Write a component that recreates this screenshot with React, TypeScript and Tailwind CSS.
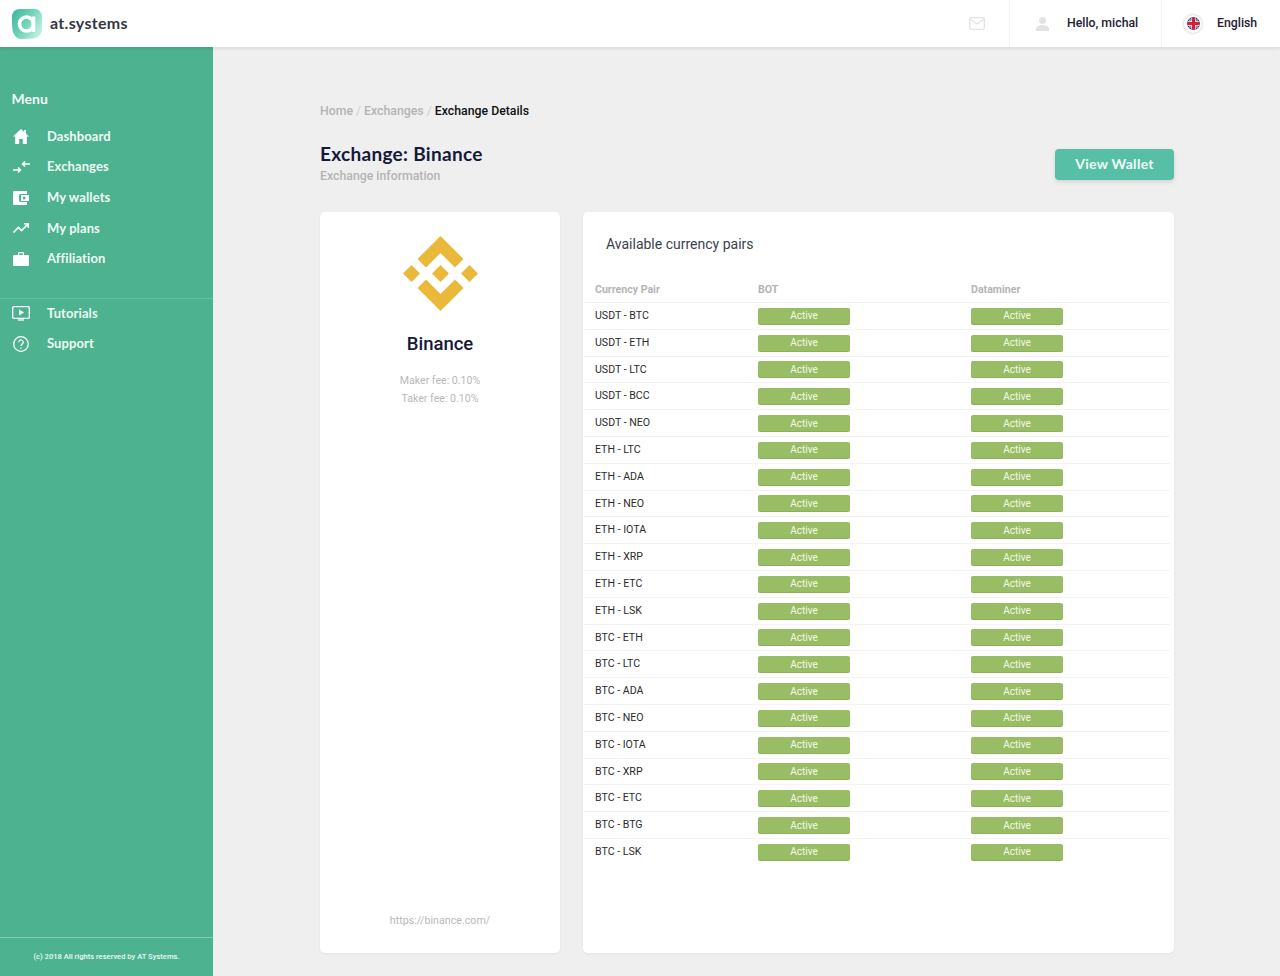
import React from "react";

const pairs = ["USDT - BTC","USDT - ETH","USDT - LTC","USDT - BCC","USDT - NEO","ETH - LTC","ETH - ADA","ETH - NEO","ETH - IOTA","ETH - XRP","ETH - ETC","ETH - LSK","BTC - ETH","BTC - LTC","BTC - ADA","BTC - NEO","BTC - IOTA","BTC - XRP","BTC - ETC","BTC - BTG","BTC - LSK"];

const Logo = () => (
  <svg width="32" height="32" viewBox="0 0 32 32">
    <defs>
      <linearGradient id="lg" x1="0" y1="0" x2="1" y2="0.6">
        <stop offset="0" stopColor="#3fb3a0" />
        <stop offset="0.55" stopColor="#6fd3b8" />
        <stop offset="1" stopColor="#b5f0da" />
      </linearGradient>
    </defs>
    <path d="M9 1h14c5 0 8 3.500 8 8v12c0 5-4 9-9 9.500l-11 .5c-4 0-7-2-8.500-6C1 22 1 14 1 9c0-4.500 3-8 8-8z" fill="url(#lg)" />
    <circle cx="15.500" cy="16" r="7" fill="none" stroke="#fff" strokeWidth="3.600" />
    <rect x="20.500" y="8.500" width="3.800" height="15.500" fill="#fff" />
  </svg>
);

const Item = ({ icon, label, h = "h-[30.7px]" }: { icon: React.ReactNode; label: string; h?: string }) => (
  <div className={`flex items-center pl-3 ${h}`}>
    <span className="flex w-[18px] justify-center">{icon}</span>
    <span className="ml-[17px] text-[13px] font-bold tracking-[0.1px] text-[#eefaf5]" style={{ fontFamily: "Lato, sans-serif" }}>{label}</span>
  </div>
);

const Home = <svg width="16" height="15" viewBox="0 0 16 15" fill="#fff"><path d="M8 0 0 7.500h2.200V15h4v-5h3.600v5h4V7.500H16L13 4.700V1h-2v1.800z" /></svg>;
const Swap = <svg width="17" height="12" viewBox="0 0 17 12" fill="none" stroke="#fff" strokeWidth="1.500"><path d="M0 9h7M5 6.500 7.500 9 5 11.500M17 3h-7M12 .5 9.500 3 12 5.500" /></svg>;
const Wallet = <svg width="16" height="14" viewBox="0 0 16 14" fill="#fff"><path fillRule="evenodd" d="M1 0h13v3H8a2 2 0 0 0-2 2v4a2 2 0 0 0 2 2h6v3H1a1 1 0 0 1-1-1V1a1 1 0 0 1 1-1zM8 4h8v6H8zm2 1.800v2.400h2.400V5.800z" /></svg>;
const Trend = <svg width="16" height="10" viewBox="0 0 16 10" fill="none" stroke="#fff" strokeWidth="1.600"><path d="M.5 9.500 5.500 4.500l3 3L15 1M11 .8h4.300V5" /></svg>;
const Case = <svg width="16" height="14" viewBox="0 0 16 14" fill="#fff"><path fillRule="evenodd" d="M5 3V1a1 1 0 0 1 1-1h4a1 1 0 0 1 1 1v2h4a1 1 0 0 1 1 1v9a1 1 0 0 1-1 1H1a1 1 0 0 1-1-1V4a1 1 0 0 1 1-1zm1.300 0h3.400V1.300H6.300z" /></svg>;
const Play = <svg width="18" height="15" viewBox="0 0 18 15" fill="none" stroke="#fff" strokeWidth="1.300"><rect x=".7" y=".7" width="16.600" height="11.600" rx="1" /><path d="M7 3.500v6l5-3z" fill="#fff" stroke="none" /><path d="M6 14h6" /></svg>;
const Help = <svg width="16" height="16" viewBox="0 0 16 16" fill="none" stroke="#fff" strokeWidth="1.300"><circle cx="8" cy="8" r="7.300" /><path d="M5.800 6.200a2.200 2.200 0 1 1 3.400 1.800C8.400 8.600 8 9 8 10" /><path d="M8 11.400v1.400" /></svg>;

const Flag = () => (
  <svg width="13" height="13" viewBox="0 0 14 14">
    <clipPath id="fc"><circle cx="7" cy="7" r="7" /></clipPath>
    <g clipPath="url(#fc)">
      <rect width="14" height="14" fill="#283a75" />
      <path d="M0 0 14 14M14 0 0 14" stroke="#fff" strokeWidth="1.500" />
      <path d="M0 0 14 14M14 0 0 14" stroke="#d0213f" strokeWidth="0.800" />
      <path d="M7 0v14M0 7h14" stroke="#fff" strokeWidth="4.600" />
      <path d="M7 0v14M0 7h14" stroke="#d0213f" strokeWidth="3.200" />
    </g>
  </svg>
);

const Badge = () => (
  <div className="flex h-4 w-[92px] items-center justify-center rounded-[2px] bg-[#98bd64] text-[10px] text-[#f3f9e8] shadow-[0_1px_0_#8bb058]">Active</div>
);

export default function App() {
  return (
    <div className="flex min-h-[976px] flex-col bg-[#efefef]" style={{ fontFamily: "Roboto, sans-serif" }}>
      <header className="z-10 flex h-[47px] items-center justify-between bg-white shadow-[0_2px_3px_rgba(0,0,0,0.08)]">
        <div className="flex items-center pl-[11px]">
          <Logo />
          <span className="relative -top-[1px] ml-[7px] text-[16px] font-bold tracking-[0.3px] text-[#33363f]" style={{ fontFamily: "Lato, sans-serif" }}>at.systems</span>
        </div>
        <div className="flex h-full items-center">
          <div className="flex h-full w-[60px] items-center justify-start pl-[20px]">
            <svg width="16" height="13" viewBox="0 0 16 13" fill="none" stroke="#e2e2e2" strokeWidth="1.300"><rect x=".7" y=".7" width="14.600" height="11.600" rx="1.500" /><path d="m1 2 7 5 7-5" /></svg>
          </div>
          <div className="flex h-full w-[152px] items-center border-l border-[#f2f2f2] pl-[26px]">
            <svg width="13" height="14" viewBox="0 0 13 14" fill="#e3e3e3"><circle cx="6.500" cy="3.500" r="3.500" /><path d="M0 14v-2c0-2.500 3-4 6.500-4s6.500 1.500 6.500 4v2z" /></svg>
            <span className="ml-[18px] text-[12.300px] font-medium text-[#1e2035]">Hello, michal</span>
          </div>
          <div className="flex h-full w-[119px] items-center border-l border-[#f2f2f2] pl-[22px]">
            <span className="flex h-[18px] w-[18px] items-center justify-center rounded-full bg-white shadow-[0_0_3px_rgba(0,0,0,0.25)]"><Flag /></span>
            <span className="ml-[15px] text-[12.300px] font-medium text-[#1e2035]">English</span>
          </div>
        </div>
      </header>
      <div className="flex flex-1">
        <aside className="flex w-[214px] flex-col border-r border-[#e8f3ee] bg-[#4cb28f] text-white">
          <div className="pl-[11.500px] pt-[43.500px] text-[14px] font-bold leading-4 text-[#f2fbf7]" style={{ fontFamily: "Lato, sans-serif" }}>Menu</div>
          <nav className="mt-[14.500px]">
            <Item icon={Home} label="Dashboard" />
            <Item icon={Swap} label="Exchanges" />
            <Item icon={Wallet} label="My wallets" />
            <Item icon={Trend} label="My plans" />
            <Item icon={Case} label="Affiliation" />
          </nav>
          <nav className="mt-[24px] border-t border-[#63c3a2] pt-0">
            <Item icon={Play} label="Tutorials" h="h-[29px]" />
            <Item icon={Help} label="Support" h="h-[31px]" />
          </nav>
          <div className="mt-auto flex h-[39px] items-center justify-center border-t border-[#7ccdb1] text-[7.600px] font-medium text-[#eefaf5]">(c) 2018 All rights reserved by AT Systems.</div>
        </aside>
        <main className="flex flex-1 flex-col px-[106px] pb-[23px] pt-[56px]">
          <div className="flex h-4 items-center text-[12.300px] font-medium text-[#b4b4b4]">
            <span>Home</span><span className="mx-[3px] font-normal text-[#cfcfcf]">/</span><span>Exchanges</span><span className="mx-[3px] font-normal text-[#cfcfcf]">/</span><span className="text-[#111111]">Exchange Details</span>
          </div>
          <div className="mt-[23px] flex items-start justify-between">
            <div>
              <h1 className="text-[19px] font-bold leading-6 tracking-[0.3px] text-[#15193a]" style={{ fontFamily: "Lato, sans-serif" }}>Exchange: Binance</h1>
              <p className="mt-[2px] text-[12.300px] font-medium leading-[16px] text-[#b4b4b4]">Exchange information</p>
            </div>
            <button className="mt-[7px] h-[31px] w-[119px] rounded-[4px] bg-[#57bfa6] pb-[3px] text-[14px] font-bold tracking-[0.3px] text-[#eefaf5] shadow-[0_2px_4px_rgba(0,0,0,0.12)]" style={{ fontFamily: "Lato, sans-serif" }}>View Wallet</button>
          </div>
          <div className="mt-[28px] flex flex-1 gap-[23px]">
            <section className="flex w-[240px] flex-col items-center rounded-[5px] bg-white pb-[24px] pt-[24px] shadow-[0_1px_3px_rgba(0,0,0,0.05)]">
              <svg width="75" height="75" viewBox="0 0 75 75" fill="#ebb93a">
                <path d="M37.500 0 60.500 23 52 31.500 37.500 17 23 31.500 14.500 23z" />
                <path d="M37.500 75 14.500 52 23 43.500 37.500 58 52 43.500 60.500 52z" />
                <path d="m37.500 29 8.500 8.500-8.500 8.500-8.500-8.500z" />
                <path d="m8.500 29 8.500 8.500-8.500 8.500L0 37.500z" />
                <path d="m66.500 29 8.500 8.500-8.500 8.500-8.500-8.500z" />
              </svg>
              <div className="mt-[21px] text-[18.500px] font-medium leading-6 text-[#15193a]">Binance</div>
              <div className="mt-[15.500px] text-[10.600px] leading-[18px] text-[#b9b9b9]">Maker fee: 0.10%</div>
              <div className="text-[10.600px] leading-[18px] text-[#b9b9b9]">Taker fee: 0.10%</div>
              <div className="mt-auto text-[10.700px] text-[#b9b9b9]">https://binance.com/</div>
            </section>
            <section className="flex-1 rounded-[5px] bg-white pt-[24px] shadow-[0_1px_3px_rgba(0,0,0,0.05)]">
              <h2 className="pl-[23px] text-[14px] leading-4 text-[#3a3f4b]">Available currency pairs</h2>
              <div className="mr-1 mt-[30px]">
                <div className="grid h-[20px] grid-cols-[163px_213px_1fr] pl-3 text-[10.600px] font-bold leading-4 text-[#b4b4b4]">
                  <span>Currency Pair</span><span>BOT</span><span>Dataminer</span>
                </div>
                {pairs.map((p) => (
                  <div key={p} className="grid h-[26.800px] grid-cols-[163px_213px_1fr] items-center border-t border-[#f3f3f3] pl-3 text-[10.600px] text-[#2b2b2b]">
                    <span>{p}</span><Badge /><Badge />
                  </div>
                ))}
              </div>
            </section>
          </div>
        </main>
      </div>
    </div>
  );
}
